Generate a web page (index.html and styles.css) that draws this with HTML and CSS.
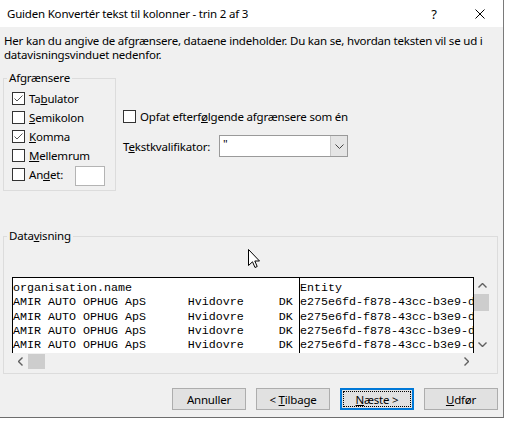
FILE: index.html
```html
<!DOCTYPE html>
<html lang="da">
<head>
  <meta charset="UTF-8">
  <title>Guiden Konvertér tekst til kolonner</title>
  <link rel="stylesheet" href="styles.css">
</head>
<body>

  <div class="dialog">
    <div class="titlebar">
      <span class="title">Guiden Konvertér tekst til kolonner - trin 2 af 3</span>
      <span class="tb-btn">?</span>
      <span class="tb-btn">
        <svg width="10" height="10" viewBox="0 0 10 10"><path d="M0.5 0.5 L9.5 9.5 M9.5 0.5 L0.5 9.5" stroke="#000" stroke-width="1" fill="none"/></svg>
      </span>
    </div>

    <div class="content">
      <p class="intro">Her kan du angive de afgrænsere, dataene indeholder. Du kan se, hvordan teksten vil se ud i datavisningsvinduet nedenfor.</p>

      <div class="options">
        <fieldset class="group delims">
          <legend>Afgrænsere</legend>
          <div class="check-row"><span class="box checked"><svg width="11" height="11" viewBox="0 0 11 11"><path d="M1.5 5.5 L4 8 L9.5 2.5" stroke="#555" fill="none"/></svg></span>Ta<u>b</u>ulator</div>
          <div class="check-row"><span class="box"></span><u>S</u>emikolon</div>
          <div class="check-row"><span class="box checked"><svg width="11" height="11" viewBox="0 0 11 11"><path d="M1.5 5.5 L4 8 L9.5 2.5" stroke="#555" fill="none"/></svg></span><u>K</u>omma</div>
          <div class="check-row"><span class="box"></span><u>M</u>ellemrum</div>
          <div class="check-row"><span class="box"></span><span class="other-label">An<u>d</u>et:</span><span class="textbox"></span></div>
        </fieldset>

        <div class="side">
          <div class="check-row"><span class="box"></span>Opfat efterf<u>ø</u>lgende afgrænsere som én</div>
          <div class="qual-row">
            <span class="qual-label">T<u>e</u>kstkvalifikator:</span>
            <div class="combo">
              <span class="combo-value">"</span>
              <span class="combo-btn"><svg width="9" height="5" viewBox="0 0 9 5"><path d="M0.5 0.5 L4.5 4.5 L8.5 0.5" stroke="#444" fill="none"/></svg></span>
            </div>
          </div>
        </div>
      </div>

      <fieldset class="group preview">
        <legend>Data<u>v</u>isning</legend>
        <div class="data">
          <svg class="cursor" width="13" height="20" viewBox="0 0 13 20"><path d="M0.5 0.5 V16.5 L4.5 12.8 L7 18.5 L9.2 17.5 L6.8 12 H11.5 Z" fill="#fff" stroke="#000" stroke-width="1"/></svg>
          <div class="data-main">
            <div class="grid">
              <div class="col col-first">organisation.name
AMIR AUTO OPHUG ApS      Hvidovre     DK
AMIR AUTO OPHUG ApS      Hvidovre     DK
AMIR AUTO OPHUG ApS      Hvidovre     DK
AMIR AUTO OPHUG ApS      Hvidovre     DK</div>
              <div class="col col-second">Entity
e275e6fd-f878-43cc-b3e9-d
e275e6fd-f878-43cc-b3e9-d
e275e6fd-f878-43cc-b3e9-d
e275e6fd-f878-43cc-b3e9-d</div>
            </div>
            <div class="vscroll">
              <span class="arrow"><svg width="9" height="5" viewBox="0 0 9 5"><path d="M0.5 4.5 L4.5 0.5 L8.5 4.5" stroke="#606060" stroke-width="1.4" fill="none"/></svg></span>
              <span class="vthumb"></span>
              <span class="spacer"></span>
              <span class="arrow"><svg width="9" height="5" viewBox="0 0 9 5"><path d="M0.5 0.5 L4.5 4.5 L8.5 0.5" stroke="#606060" stroke-width="1.4" fill="none"/></svg></span>
            </div>
          </div>
          <div class="data-foot">
            <div class="hscroll">
              <span class="arrow"><svg width="5" height="9" viewBox="0 0 5 9"><path d="M4.5 0.5 L0.5 4.5 L4.5 8.5" stroke="#606060" stroke-width="1.4" fill="none"/></svg></span>
              <span class="hthumb"></span>
              <span class="spacer"></span>
              <span class="arrow"><svg width="5" height="9" viewBox="0 0 5 9"><path d="M0.5 0.5 L4.5 4.5 L0.5 8.5" stroke="#606060" stroke-width="1.4" fill="none"/></svg></span>
            </div>
          </div>
        </div>
      </fieldset>

      <div class="buttons">
        <button class="btn">Annuller</button>
        <button class="btn">&lt; <u>T</u>ilbage</button>
        <button class="btn default"><span class="focus"><u>N</u>æste &gt;</span></button>
        <button class="btn"><u>U</u>dfør</button>
      </div>
    </div>
  </div>

</body>
</html>
```

FILE: styles.css
```css
body {
  margin: 0;
  background: #fff;
  font-family: "Noto Sans", sans-serif;
  font-size: 11.5px;
  letter-spacing: -0.2px;
  color: #000;
}

.dialog {
  width: 503px;
  height: 417px;
  background: #f0f0f0;
  border-right: 1px solid #7a7a7a;
  border-bottom: 1px solid #6d6d6d;
  box-shadow: 0 4px 0 #d9d9d9;
  display: flex;
  flex-direction: column;
}

.titlebar {
  height: 27px;
  background: #fff;
  display: flex;
  align-items: center;
}

.title {
  flex: 1;
  padding-left: 7px;
}

.tb-btn {
  width: 46px;
  height: 27px;
  display: flex;
  align-items: center;
  justify-content: center;
  font-size: 13px;
}

.content {
  flex: 1;
  padding: 7px 5px 0 3px;
  display: flex;
  flex-direction: column;
}

.intro {
  margin: 0 0 0 1px;
  line-height: 14px;
}

.options {
  display: flex;
  gap: 7px;
  margin-top: 9px;
}

.group {
  margin: 0;
  border: 1px solid #dcdcdc;
  min-width: 0;
}

.group legend {
  padding: 0 2px;
  margin-left: -5px;
  line-height: 14px;
}

.delims {
  width: 113px;
  box-sizing: border-box;
  padding: 4px 0 6px 8px;
}

.check-row {
  height: 19px;
  display: flex;
  align-items: center;
  white-space: nowrap;
}

.box {
  width: 13px;
  height: 13px;
  box-sizing: border-box;
  border: 1px solid #333;
  background: #fff;
  margin-right: 4px;
  flex-shrink: 0;
}

.box svg {
  display: block;
}

.other-label {
  width: 46px;
}

.textbox {
  width: 30px;
  height: 20px;
  box-sizing: border-box;
  border: 1px solid #b4b4b4;
  background: #fff;
  margin-top: 3px;
}

.side {
  padding-top: 36px;
  display: flex;
  flex-direction: column;
  gap: 9px;
}

.qual-row {
  display: flex;
  align-items: center;
}

.qual-label {
  width: 96px;
}

.combo {
  width: 129px;
  height: 22px;
  box-sizing: border-box;
  border: 1px solid #9a9a9a;
  background: #fff;
  display: flex;
}

.combo-value {
  flex: 1;
  padding-left: 3px;
  line-height: 16px;
}

.combo-btn {
  width: 16px;
  background: #e5e5e5;
  border-left: 1px solid #c8c8c8;
  display: flex;
  align-items: center;
  justify-content: center;
}

.preview {
  margin-top: 38px;
  padding: 34px 6px 4px 8px;
}

.data {
  position: relative;
}

.cursor {
  position: absolute;
  left: 236px;
  top: -28px;
}

.data-main {
  display: flex;
}

.grid {
  width: 462px;
  height: 76px;
  box-sizing: border-box;
  border: 1px solid #000;
  border-bottom: none;
  background: #fff;
  display: flex;
  overflow: hidden;
}

.col {
  font-family: "Liberation Mono", monospace;
  font-size: 11.67px;
  letter-spacing: 0;
  line-height: 14.25px;
  white-space: pre;
  padding-top: 3px;
}

.col-first {
  width: 286px;
  flex-shrink: 0;
  border-right: 1px solid #000;
}

.col-second {
  flex: 1;
  min-width: 0;
  overflow: hidden;
}

.vscroll {
  width: 16px;
  height: 76px;
  display: flex;
  flex-direction: column;
}

.vscroll .arrow {
  height: 17px;
  display: flex;
  align-items: center;
  justify-content: center;
}

.vthumb {
  width: 15px;
  height: 17px;
  background: #cdcdcd;
}

.spacer {
  flex: 1;
}

.data-foot {
  display: flex;
}

.hscroll {
  width: 462px;
  height: 16px;
  display: flex;
}

.hscroll .arrow {
  width: 16px;
  display: flex;
  align-items: center;
  justify-content: center;
}

.hthumb {
  width: 17px;
  height: 15px;
  margin-top: 1px;
  background: #cdcdcd;
}

.buttons {
  display: flex;
  justify-content: flex-end;
  gap: 10px;
  margin-top: 14px;
}

.btn {
  width: 74px;
  height: 22px;
  box-sizing: border-box;
  border: 1px solid #adadad;
  background: #e1e1e1;
  font-family: "Noto Sans", sans-serif;
  font-size: 11.5px;
  letter-spacing: -0.2px;
  color: #000;
  padding: 0;
}

.btn.default {
  border: 2px solid #0078d7;
  padding: 1px;
}

.focus {
  display: block;
  height: 100%;
  box-sizing: border-box;
  border: 1px dotted #000;
  line-height: 15px;
}
```
